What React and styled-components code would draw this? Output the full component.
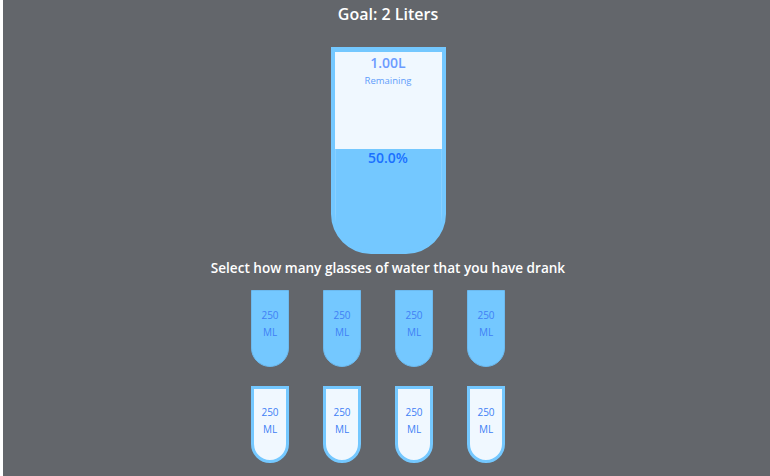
import React from "react";
import styled, { createGlobalStyle } from "styled-components";

const Global = createGlobalStyle`
  html, body { margin: 0; padding: 0; background: #fff; overflow: hidden; }
  #root { height: 476px; overflow: hidden; }
`;

const Page = styled.main`
  box-sizing: border-box;
  margin-left: 3px;
  height: 476px;
  padding: 3px 0 0 3px;
  background: #63666b;
  color: #fff;
  font-family: "Open Sans", "Noto Sans", sans-serif;
  display: flex;
  flex-direction: column;
  align-items: center;
`;

const Title = styled.h1`
  margin: 0 0 22px;
  font-size: 16px;
  line-height: 22px;
  font-weight: 600;
`;

const BigGlass = styled.div`
  box-sizing: border-box;
  width: 115px;
  height: 207px;
  border: 4px solid #74c8ff;
  border-top-width: 5px;
  border-radius: 0 0 40px 40px;
  overflow: hidden;
  display: flex;
  flex-direction: column;
  background: #74c8ff;
`;

const Remaining = styled.div`
  height: 97px;
  display: flex;
  flex-direction: column;
  align-items: center;
  background: #f0f8ff;
  color: #6c9cff;
`;

const Litres = styled.span`
  margin-top: 1px;
  font-size: 14px;
  line-height: 20px;
  font-weight: 600;
`;

const Small = styled.small`
  margin-top: 1px;
  font-size: 9.5px;
  line-height: 14px;
  color: #5f9dfb;
`;

const Filled = styled.div`
  flex: 1;
  color: #1a70ff;
  text-align: center;
  font-size: 14px;
  line-height: 18px;
  font-weight: 600;
  box-shadow: inset 1px 0 rgba(255, 255, 255, 0.15), inset -1px 0 rgba(255, 255, 255, 0.15);
`;

const Prompt = styled.p`
  margin: 5px 0 13px;
  font-size: 13.55px;
  line-height: 18px;
  font-weight: 600;
`;

const Grid = styled.div`
  display: grid;
  grid-template-columns: repeat(4, 38px);
  gap: 19px 34px;
  margin-right: 20px;
`;

const Cup = styled.div`
  box-sizing: border-box;
  width: 38px;
  height: 77px;
  border-style: solid;
  border-color: ${p => (p.$full ? "#6cb9ee" : "#74c8ff")};
  border-width: ${p => (p.$full ? "1px" : "3px")};
  border-radius: 0 0 19px 19px;
  background: ${p => (p.$full ? "#74c8ff" : "#f0f8ff")};
  color: #4080f5;
  font-size: 10px;
  line-height: 17px;
  display: flex;
  flex-direction: column;
  align-items: center;
  justify-content: center;
  padding-bottom: ${p => (p.$full ? "9px" : "7px")};
`;

const cups = [true, true, true, true, false, false, false, false];

export default function App() {
  return (
    <Page>
      <Global />
      <Title>Goal: 2 Liters</Title>
      <BigGlass>
        <Remaining>
          <Litres>1.00L</Litres>
          <Small>Remaining</Small>
        </Remaining>
        <Filled>50.0%</Filled>
      </BigGlass>
      <Prompt>Select how many glasses of water that you have drank</Prompt>
      <Grid>
        {cups.map((full, i) => (
          <Cup key={i} $full={full}>
            <span>250</span>
            <span>ML</span>
          </Cup>
        ))}
      </Grid>
    </Page>
  );
}
